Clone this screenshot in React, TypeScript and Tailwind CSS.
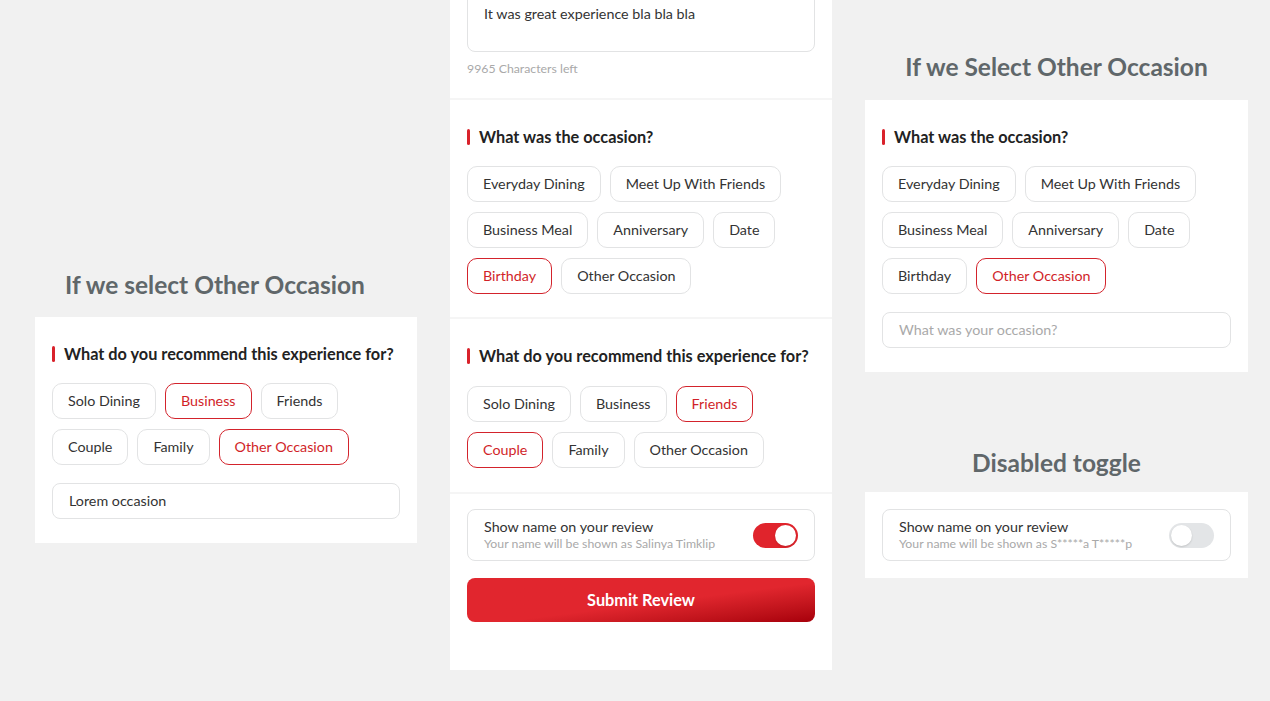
import React from "react";

const font = { fontFamily: "Lato, 'Open Sans', sans-serif" };

function Chip({ label, active }: { label: string; active?: boolean }) {
  return (
    <div
      className={
        "h-[36px] px-[15px] flex items-center rounded-[10px] border text-[14.3px] " +
        (active ? "border-[#d3232c] text-[#d11f29]" : "border-[#e2e3e4] text-[#333]")
      }
    >
      {label}
    </div>
  );
}

function Heading({ text }: { text: string }) {
  return (
    <div className="flex items-center gap-[9px] h-6">
      <span className="w-[3px] h-[16px] rounded-full bg-[#d9222b]" />
      <span className="text-[16.3px] font-bold text-[#222] leading-6">{text}</span>
    </div>
  );
}

function ChipGroup({ rows, active }: { rows: string[][]; active: string[] }) {
  return (
    <div className="flex flex-col gap-[10px]">
      {rows.map((row, i) => (
        <div key={i} className="flex gap-[9px]">
          {row.map((c) => (
            <Chip key={c} label={c} active={active.includes(c)} />
          ))}
        </div>
      ))}
    </div>
  );
}

const occasions = [
  ["Everyday Dining", "Meet Up With Friends"],
  ["Business Meal", "Anniversary", "Date"],
  ["Birthday", "Other Occasion"],
];

const recommend = [
  ["Solo Dining", "Business", "Friends"],
  ["Couple", "Family", "Other Occasion"],
];

function Toggle({ on }: { on?: boolean }) {
  return (
    <div
      className={
        "w-[45px] h-[25px] rounded-full flex items-center px-[2px] " +
        (on ? "bg-[#e0242c] justify-end" : "bg-[#e3e5e7] justify-start")
      }
    >
      <div className="w-[21px] h-[21px] rounded-full bg-white shadow-[0_1px_2px_rgba(0,0,0,0.15)]" />
    </div>
  );
}

function NameCard({ on, name }: { on?: boolean; name: string }) {
  return (
    <div className="h-[52px] border border-[#e2e3e4] rounded-[8px] flex items-center justify-between pl-4 pr-4">
      <div className="flex flex-col">
        <span className="text-[14.3px] leading-[18px] text-[#333]">Show name on your review</span>
        <span className="text-[12.3px] leading-[16px] text-[#a9a9a9]">Your name will be shown as {name}</span>
      </div>
      <Toggle on={on} />
    </div>
  );
}

function Title({ text }: { text: string }) {
  return <h2 className="text-[24.5px] leading-8 font-bold text-[#60676a] text-center">{text}</h2>;
}

export default function App() {
  return (
    <div className="w-[1270px] h-[701px] bg-[#f1f1f1] overflow-hidden flex gap-[33px] pl-[35px]" style={font}>
      {/* left */}
      <div className="w-[382px] pt-[269px]">
        <div className="pr-[22px]">
          <Title text="If we select Other Occasion" />
        </div>
        <div className="mt-4 bg-white px-[17px] pt-[25px] pb-6">
          <Heading text="What do you recommend this experience for?" />
          <div className="mt-[17px]">
            <ChipGroup rows={recommend} active={["Business", "Other Occasion"]} />
          </div>
          <div className="mt-[18px] h-[36px] border border-[#e2e3e4] rounded-[8px] flex items-center px-4 text-[14.3px] text-[#333]">
            Lorem occasion
          </div>
        </div>
      </div>

      {/* middle */}
      <div className="w-[382px] h-[710px] -mt-[40px] bg-white flex flex-col">
        <div className="px-[17px] pt-3 pb-[21px]">
          <div className="h-[80px] border border-[#e2e3e4] rounded-[8px] px-4 pt-[31px] text-[14.3px] leading-5 text-[#333]">
            It was great experience bla bla bla
          </div>
          <div className="mt-[9px] text-[12.3px] leading-4 text-[#a9a9a9]">9965 Characters left</div>
        </div>
        <div className="h-[2px] bg-[#f5f5f5]" />
        <div className="px-[17px] pt-[25px] pb-[23px]">
          <Heading text="What was the occasion?" />
          <div className="mt-[17px]">
            <ChipGroup rows={occasions} active={["Birthday"]} />
          </div>
        </div>
        <div className="h-[2px] bg-[#f5f5f5]" />
        <div className="px-[17px] pt-[25px] pb-6">
          <Heading text="What do you recommend this experience for?" />
          <div className="mt-[18px]">
            <ChipGroup rows={recommend} active={["Friends", "Couple"]} />
          </div>
        </div>
        <div className="h-[2px] bg-[#f5f5f5]" />
        <div className="px-[17px] pt-[15px]">
          <NameCard on name="Salinya Timklip" />
          <button className="mt-[17px] w-full h-[44px] rounded-[8px] bg-gradient-to-br from-[#e1262e] from-55% to-[#a7000a] text-white text-[16.3px] font-bold">
            Submit Review
          </button>
        </div>
      </div>

      {/* right */}
      <div className="w-[383px] pt-[51px]">
        <Title text="If we Select Other Occasion" />
        <div className="mt-[17px] bg-white px-[17px] pt-[25px] pb-6">
          <Heading text="What was the occasion?" />
          <div className="mt-[17px]">
            <ChipGroup rows={occasions} active={["Other Occasion"]} />
          </div>
          <div className="mt-[18px] h-[36px] border border-[#e2e3e4] rounded-[8px] flex items-center px-4 text-[14.3px] text-[#a9a9a9]">
            What was your occasion?
          </div>
        </div>
        <div className="mt-[75px]">
          <Title text="Disabled toggle" />
        </div>
        <div className="mt-[13px] bg-white px-[17px] py-[17px]">
          <NameCard name="S*****a T*****p" />
        </div>
      </div>
    </div>
  );
}
